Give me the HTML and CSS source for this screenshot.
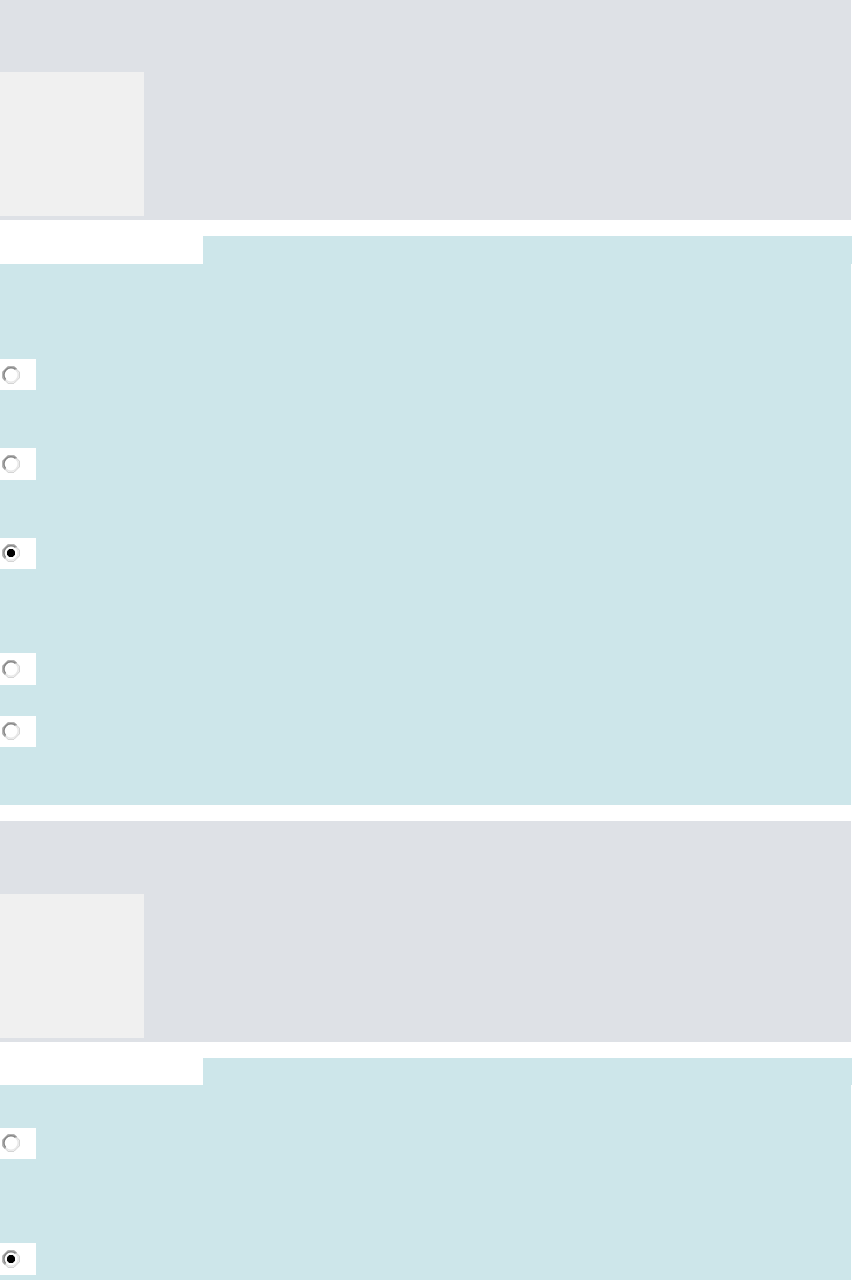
FILE: index.html
```
<!DOCTYPE html>
<html lang="en">

<head>
     <meta charset="UTF-8">
     <meta name="viewport" content="width=device-width, initial-scale=1.0">
     <title>Quiz</title>
     <link rel="stylesheet" href="styles.css">
</head>

<body>
     <!-- radio button drawings, used by every answer -->
     <svg class="symbols">
          <symbol id="radio" viewBox="0 0 18 18">
               <path d="M6 .7H12L17.3 6V12L12 17.3H6L.7 12V6Z" fill="#fff" stroke="#cbcbcb" stroke-width="1" />
               <circle cx="9" cy="9" r="7.2" fill="none" stroke="#e8e8e8" stroke-width="1.4" />
               <path d="M3.3 14.7L1 12V6L6 1H12L14.7 3.3" fill="none" stroke="#a6a6a6" stroke-width="1.3" />
               <path d="M3.6 13.5A7.1 7.1 0 0 1 13.5 3.4" fill="none" stroke="#858585" stroke-width="1.5" />
          </symbol>
          <symbol id="radio-checked" viewBox="0 0 18 18">
               <use href="#radio" width="18" height="18" />
               <path d="M7.2 5H10.8L13 7.2V10.8L10.8 13H7.2L5 10.8V7.2Z" fill="#000" />
          </symbol>
     </svg>

     <main>
          <section class="question first">
               <div class="info">
                    <div class="state"></div>
               </div>
               <div class="content">
                    <div class="heading">
                         <div class="label"></div>
                    </div>
                    <div class="answers">
                         <div class="answer"><svg class="radio"><use href="#radio" /></svg></div>
                         <div class="answer tall"><svg class="radio"><use href="#radio" /></svg></div>
                         <div class="answer"><svg class="radio"><use href="#radio-checked" /></svg></div>
                         <div class="answer tall"><svg class="radio"><use href="#radio" /></svg></div>
                         <div class="answer"><svg class="radio"><use href="#radio" /></svg></div>
                    </div>
               </div>
          </section>

          <section class="question second">
               <div class="info">
                    <div class="state"></div>
               </div>
               <div class="content">
                    <div class="heading">
                         <div class="label"></div>
                    </div>
                    <div class="answers">
                         <div class="answer"><svg class="radio"><use href="#radio" /></svg></div>
                         <div class="answer tall"><svg class="radio"><use href="#radio-checked" /></svg></div>
                    </div>
               </div>
          </section>
     </main>
</body>

</html>
```

FILE: styles.css
```
body {
     margin: 0;
     padding: 0;
     background-color: #fff;
}

main {
     height: 1280px;
     overflow: hidden;
}

.symbols {
     display: none;
}

.question {
     display: flex;
     flex-direction: column;
     gap: 16px;
     margin-bottom: 16px;
}

.info {
     box-sizing: border-box;
     height: 220px;
     margin-right: 1px;
     padding-top: 72px;
     background-color: #dee1e6;
}

.second .info {
     height: 221px;
     padding-top: 73px;
}

.state {
     width: 144px;
     height: 144px;
     background-color: #f0f0f0;
}

.heading {
     height: 28px;
     background-color: #cde6ea;
}

.second .heading {
     height: 27px;
}

.label {
     width: 203px;
     height: 100%;
     background-color: #fff;
}

.answers {
     box-sizing: border-box;
     height: 541px;
     margin-right: 1px;
     padding-top: 95px;
     background-color: #cde6ea;
}

.second .answers {
     padding-top: 43px;
}

.answer {
     box-sizing: border-box;
     width: 36px;
     height: 31px;
     margin-bottom: 58px;
     padding: 7px 0 0 2px;
     background-color: #fff;
}

.answer.tall {
     height: 32px;
}

.first .answer:nth-child(3),
.second .answer:nth-child(1) {
     margin-bottom: 84px;
}

.first .answer:nth-child(3) {
     padding-top: 6px;
}

.first .answer:nth-child(4) {
     margin-bottom: 31px;
}

.first .answer:nth-child(5),
.second .answer:nth-child(1) {
     padding-top: 6px;
}

.radio {
     display: block;
     width: 18px;
     height: 18px;
}
```
